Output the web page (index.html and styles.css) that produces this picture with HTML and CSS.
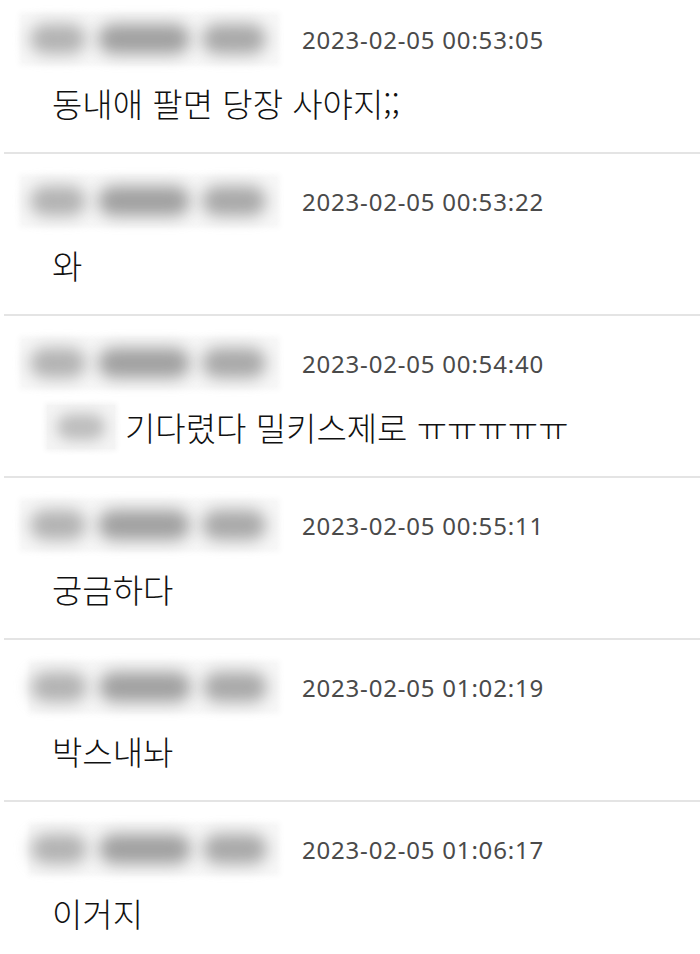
FILE: index.html
```html
<!DOCTYPE html>
<html lang="ko">
<head>
  <meta charset="UTF-8">
  <meta name="viewport" content="width=device-width, initial-scale=1.0">
  <title>댓글</title>
  <link rel="stylesheet" href="styles.css">
</head>
<body>
  <ul class="comment-list">
    <li class="comment">
      <div class="comment-head">
        <span class="nick-blur"><i class="b1"></i><i class="b2"></i><i class="b3"></i></span>
        <span class="date">2023-02-05 00:53:05</span>
      </div>
      <p class="comment-text">동내애 팔면 당장 사야지;;</p>
    </li>
    <li class="comment">
      <div class="comment-head">
        <span class="nick-blur"><i class="b1"></i><i class="b2"></i><i class="b3"></i></span>
        <span class="date">2023-02-05 00:53:22</span>
      </div>
      <p class="comment-text">와</p>
    </li>
    <li class="comment">
      <div class="comment-head">
        <span class="nick-blur"><i class="b1"></i><i class="b2"></i><i class="b3"></i></span>
        <span class="date">2023-02-05 00:54:40</span>
      </div>
      <p class="comment-text"><span class="mention-blur"><i></i></span>기다렸다 밀키스제로 ㅠㅠㅠㅠㅠ</p>
    </li>
    <li class="comment">
      <div class="comment-head">
        <span class="nick-blur"><i class="b1"></i><i class="b2"></i><i class="b3"></i></span>
        <span class="date">2023-02-05 00:55:11</span>
      </div>
      <p class="comment-text">궁금하다</p>
    </li>
    <li class="comment">
      <div class="comment-head">
        <span class="nick-blur shifted"><i class="b1"></i><i class="b2"></i><i class="b3"></i></span>
        <span class="date">2023-02-05 01:02:19</span>
      </div>
      <p class="comment-text">박스내놔</p>
    </li>
    <li class="comment">
      <div class="comment-head">
        <span class="nick-blur shifted"><i class="b1"></i><i class="b2"></i><i class="b3"></i></span>
        <span class="date">2023-02-05 01:06:17</span>
      </div>
      <p class="comment-text">이거지</p>
    </li>
  </ul>
</body>
</html>
```

FILE: styles.css
```css
body {
  margin: 0;
  background-color: #fff;
  font-family: "Noto Sans CJK KR", "Noto Sans", sans-serif;
  color: #111;
  overflow: hidden;
}
.comment-list {
  list-style: none;
  margin: 0 0 0 4px;
  padding: 0;
}
.comment {
  padding: 23px 0 29px 0;
  border-bottom: 2px solid #e4e4e4;
}
.comment:first-child {
  padding-top: 15px;
}
.comment:last-child {
  border-bottom: none;
}
.comment-head {
  display: flex;
  align-items: center;
  height: 48px;
  gap: 25px;
  padding-left: 18px;
}
.nick-blur {
  display: flex;
  align-items: center;
  gap: 12px;
  width: 255px;
  height: 48px;
  padding-left: 8px;
  box-sizing: border-box;
  background-color: #f7f7f7;
  box-shadow: 0 0 6px 3px #f7f7f7;
}
.nick-blur.shifted {
  margin-left: 9px;
  width: 246px;
  padding-left: 0;
}
.nick-blur i {
  display: block;
  height: 30px;
  border-radius: 15px;
  background-color: #a8a8a8;
  filter: blur(8px);
}
.nick-blur .b1 {
  width: 56px;
  background-color: #b2b2b2;
}
.nick-blur .b2 {
  width: 92px;
  background-color: #a0a0a0;
}
.nick-blur .b3 {
  width: 64px;
}
.date {
  font-family: "Noto Sans", sans-serif;
  font-size: 24px;
  color: #4a4a4a;
  letter-spacing: 0.8px;
}
.comment-text {
  display: flex;
  align-items: center;
  margin: 20px 0 0 0;
  padding-left: 48px;
  height: 40px;
  font-size: 33px;
  font-weight: 300;
  line-height: 40px;
}
.mention-blur {
  display: flex;
  align-items: center;
  justify-content: center;
  width: 68px;
  height: 44px;
  margin: 0 10px 0 -5px;
  background-color: #f4f4f4;
  box-shadow: 0 0 5px 2px #f4f4f4;
}
.mention-blur i {
  display: block;
  width: 48px;
  height: 26px;
  border-radius: 13px;
  background-color: #bdbdbd;
  filter: blur(7px);
}
```
